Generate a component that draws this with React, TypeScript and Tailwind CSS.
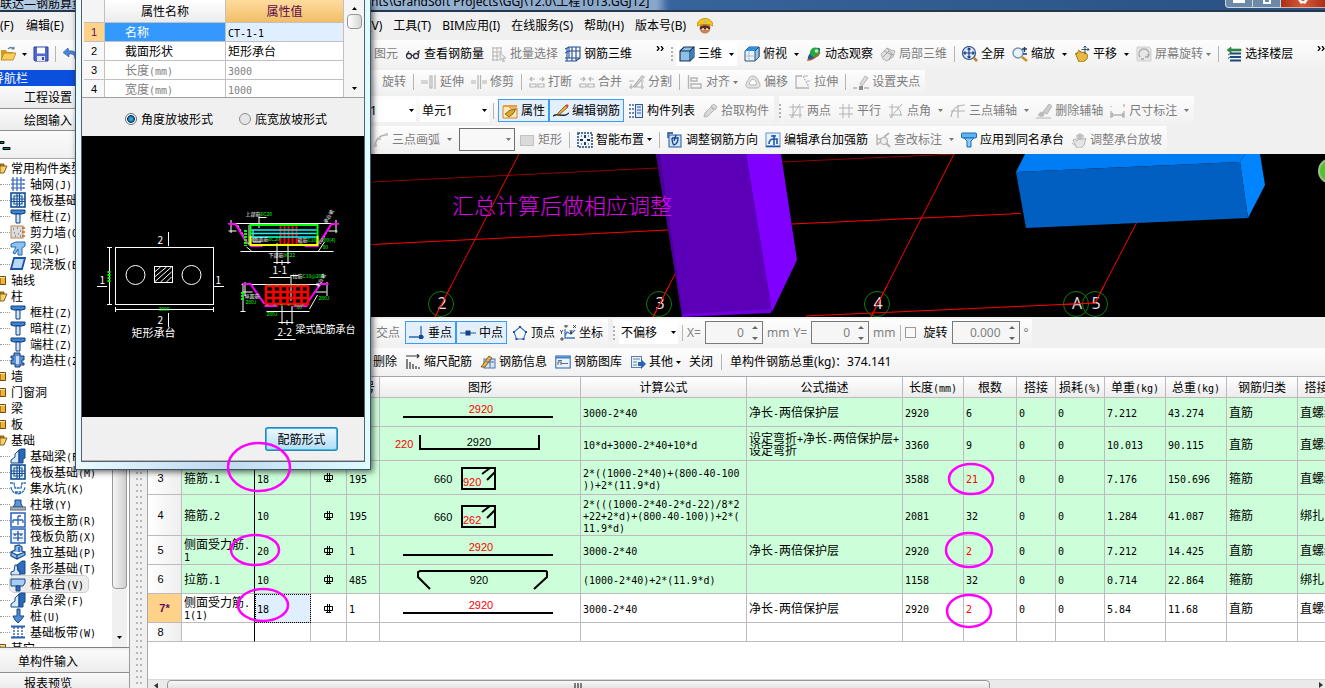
import type { ReactNode } from 'react';

const G = '#b4b4b4';
const B = '#1d57a8';

const icons: Record<string, ReactNode> = {
  open: (<><path d="M1 4h5l1 2h6v8H1z" fill="#d99a1c" /><path d="M1 14l3-7h12l-3 7z" fill="#f7cf5e" stroke="#b9790f" strokeWidth=".8" /><path d="M8 3c2-2 4-2 6 0M14 3V.8M14 3h-2.400" fill="none" stroke="#5b7f9f" strokeWidth="1.200" /></>),
  save: (<><path d="M1 1h14v14H2l-1-1z" fill="#5268cf" stroke="#2a3f9c" /><rect x="4" y="1.500" width="8" height="6" fill="#fff" /><rect x="4" y="10" width="8" height="5" fill="#dfe6f7" /><rect x="9" y="11" width="2" height="3" fill="#2f49b8" /></>),
  undo: <path d="M6 2L1 6.500l6 4.500V8c4-.5 6 1 6 5 3-5 0-9-6-8z" fill="#4a86d0" stroke="#2a5ba5" strokeWidth=".6" />,
  worker: (<><circle cx="8" cy="10" r="5.500" fill="#c98258" /><path d="M0 8C0-2 16-2 16 8c-4-2-12-2-16 0z" fill="#f6c515" stroke="#a97808" strokeWidth=".7" /><path d="M3 9c3-2 7-2 10 0v2H3z" fill="#5c2f1a" /><circle cx="6" cy="11" r=".9" fill="#fff" /><circle cx="10" cy="11" r=".9" fill="#fff" /><circle cx="8" cy="4" r="1.200" fill="#7cc4f0" /></>),
  glasses: (<><circle cx="4" cy="10" r="2.500" fill="none" stroke="#334" strokeWidth="1.300" /><circle cx="11" cy="10" r="2.500" fill="none" stroke="#334" strokeWidth="1.300" /><path d="M6.500 9.500h2M1.500 9L4 5M13.500 9L14 5l-2 1" fill="none" stroke="#334" strokeWidth="1.200" /></>),
  batch: (<><path d="M1 2h10M1 6h10M1 10h7M1 14h7M2 1v14M6 1v14M10 1v6" stroke={G} fill="none" /><path d="M9 7l6 5-3 .3 1.500 3-1.500.5-1.300-3-1.700 1.500z" fill="#eee" stroke={G} /></>),
  rebar3d: <path d="M0 3l4-2h11v11l-4 3H0M4 1v11M0 7l4-2h11M0 12h15M2 2v13M7 1v14M11 1v14" fill="none" stroke="#1f4c94" strokeWidth="1.100" />,
  cube: (<><path d="M1 5l4-4h10v10l-4 4H1z" fill="#8cc0ea" stroke="#16314f" strokeWidth="1.100" /><path d="M1 5h10v10M11 5l4-4" fill="none" stroke="#16314f" strokeWidth="1.100" /><path d="M11.500 5.500L15 2v9l-3.500 3.500z" fill="#3f7fb9" /></>),
  cubetop: (<><path d="M1 5l4-4h10v10l-4 4H1z" fill="#e8f2fb" stroke="#25527f" /><path d="M1 5l4-4h10l-4 4z" fill="#2e8fe0" /><path d="M11 5l4-4v10l-4 4z" fill="#9cc3e4" stroke="#25527f" /><path d="M5 5v10M1 10h10" stroke="#9ab" strokeWidth=".7" /></>),
  orbit: (<><ellipse cx="8" cy="8" rx="8" ry="3.500" transform="rotate(-45 8 8)" fill="#155c9c" /><circle cx="9" cy="6.500" r="5" fill="#25a844" /><circle cx="10.500" cy="5" r="1.800" fill="#b7f3bb" /><path d="M1 14c4 1 10-3 13-8" stroke="#d65227" fill="none" strokeWidth="1.300" /></>),
  part3d: (<><path d="M1 8l6-6 4 2 4 1-2 6-6 4-4-2z" fill="#e0e0e0" stroke={G} /><path d="M4 5l6 3 4 1M7 2l5 6-3 6M3 11l6-6" fill="none" stroke="#a0a0a0" /></>),
  full: (<><circle cx="7" cy="7" r="6.500" fill="#dcebfb" stroke="#31567f" strokeWidth="1.200" /><path d="M7 2v10M2 7h10M5.500 3.500L7 2l1.500 1.500M5.500 10.500L7 12l1.500-1.500M3.500 5.500L2 7l1.500 1.500M10.500 5.500L12 7l-1.500 1.500" fill="none" stroke="#1b3f88" strokeWidth="1.200" /><path d="M12 12l3 3" stroke="#c08020" strokeWidth="2.500" /></>),
  zoom: (<><circle cx="6" cy="7" r="5" fill="#e6f2fc" stroke="#7b93ab" strokeWidth="1.400" /><path d="M10 11l5 4" stroke="#c8902a" strokeWidth="2.600" /><path d="M10 3h5M12.500 1v5M11 8h4" stroke="#1f3e70" strokeWidth="1.400" /></>),
  pan: (<><path d="M2 9c0-3 3-4 5-3l5 1c2 1 2 5 0 7l-3 2H5z" fill="#e8b840" stroke="#9c6e10" strokeWidth=".9" /><path d="M4 7l-3 1M7 6L4 4" stroke="#9c6e10" /><path d="M11 0v8M7.500 3.500h7.500M9.500 1.500L11 0l1.500 1.500M13.500 2L15 3.500 13.500 5" stroke="#34506f" fill="none" /></>),
  rotscr: (<><path d="M1 1h12l2 2v12H1z" fill="#e6e6e6" stroke="#cfcfcf" /><path d="M4 11a5 5 0 1 1 8 0M12 11l-3 0M12 11V8M5 13h3" fill="none" stroke="#a8a8a8" strokeWidth="1.300" /></>),
  floors: (<><path d="M1 4l4-3v2h10v2H5v2z" fill="#2a9540" stroke="#145c24" strokeWidth=".5" /><path d="M4 7.500h11M4 11h11M4 14.500h11" stroke="#1d4b7c" strokeWidth="1.800" /><path d="M2 9l2-1.500M2 12.500L4 11" stroke="#1d4b7c" /></>),
  extend: <path d="M0 7h7M0 9h7M9 2h2v12H9zM14 1v14" fill="none" stroke={G} strokeWidth="1.200" />,
  trim: <path d="M0 7h5M0 9h5M11 7h5M11 9h5M7 1v14M9.500 1v14" fill="none" stroke={G} strokeWidth="1.200" />,
  brk: <path d="M1 10h6v3H1zM9 10h6v3H9zM1 5h5M3 3L1 5l2 2M15 5h-5M13 3l2 2-2 2" fill="none" stroke={G} strokeWidth="1.200" />,
  merge: <path d="M1 10h6v3H1zM9 10h6v3H9zM1 5h5M4 3l2 2-2 2M15 5h-5M12 3l-2 2 2 2" fill="none" stroke={G} strokeWidth="1.200" />,
  split: <path d="M0 7h5M0 13h15M11 7h4M4 13l9-11 2 1-9 10M2 10v5M13 8v7" fill="none" stroke={G} strokeWidth="1.200" />,
  align: (<><path d="M1.500 1v14M4 4h6v3H4zM4 10h10v4H4z" fill="none" stroke={G} strokeWidth="1.400" /></>),
  offset: (<><path d="M8 2c4 0 4 3 6 6s1 6-2 6H4c-3 0-4-3-2-6s2-6 6-6z" fill="#e3e3e3" stroke={G} /><path d="M8 5c2 0 2 2 3 3s1 3-1 3H6c-2 0-2-2-1-3s1-3 3-3z" fill="#fff" stroke={G} /></>),
  stretch: (<><path d="M7 2H1v12h13" fill="none" stroke={G} strokeWidth="1.300" /><path d="M8 2l6 11" stroke={G} strokeWidth="1.200" strokeDasharray="2 1" /><path d="M9 2l4 0M12 7h3" stroke={G} /></>),
  grip: (<><path d="M7 10L12 2l3 2-6 8z" fill="#ddd" stroke={G} /><path d="M0 14h4M11 14h5" stroke={G} strokeWidth="1.300" /><rect x="6" y="12" width="4" height="4" fill="#8a8a8a" /></>),
  prop: (<><path d="M1 3h6l1 2h7v10H1z" fill="#fde9c4" stroke="#d8831c" /><path d="M1 2h14v2H1z" fill="#ef9d38" /><path d="M3 11l5-4 6-1-3 5-4 3z" fill="#d7a62a" stroke="#7c5b0d" strokeWidth=".8" /></>),
  editbar: (<><path d="M2 12c3-1 5 1 11 0M2 12l-2 1M13 12l3-2" stroke="#22303e" strokeWidth="1.400" fill="none" /><path d="M5 10L13 2l2 2-8 7-3 1z" fill="#e9b13b" stroke="#6a4717" strokeWidth=".8" /><path d="M12 3l2-2 2 2-2 1z" fill="#d9452f" /></>),
  list: (<><path d="M1 2h2M1 6h2M1 10h2M1 14h2M4 2h2M4 6h2M4 10h2M4 14h2" stroke="#44618d" strokeWidth="1.500" /><rect x="7.500" y="1.500" width="7" height="13" fill="#dbe8fa" stroke="#2c58a4" /><path d="M9 4h4M9 7h4M9 10h4" stroke="#2c58a4" /></>),
  pick: <path d="M2 14l1-4 6-6 3 3-6 6zM9 3l3-2 3 3-2 3z" fill="#d9d9d9" stroke={G} />,
  two: <path d="M1 4h15M1 12h13M5 1v14M12 1L3 15M12 4v11" fill="none" stroke={G} />,
  para: <path d="M1 5h14M1 11h14M5 1v14M11 1v14" fill="none" stroke={G} />,
  angle: <path d="M1 4h10M1 12h13M4 1v14M14 1L2 15M9 5c3 1 4 4 4 8" fill="none" stroke={G} />,
  arcax: <path d="M1 8h14M8 2v13M1 14C2 6 6 2 15 2" fill="none" stroke={G} strokeWidth="1.200" />,
  delax: (<><path d="M7 9l6-8 3 2-5 8z" fill="#ccc" stroke={G} /><path d="M2 13c0-3 3-5 5-4s2 4-1 5z" fill="#bbb" /><path d="M0 15h15" stroke={G} /></>),
  dim: <path d="M1 3v1M14 1v3M1 8v7M14 8v7M1 12h13M3 10l-2 2 2 2M12 10l2 2-2 2" fill="none" stroke={G} strokeWidth="1.300" />,
  arc3: (<><path d="M2 14C3 7 7 3 13 3" fill="none" stroke={G} strokeWidth="1.400" /><path d="M1 12h3v3H1zM5 5h3v3H5zM12 1h3v3h-3z" fill="#c9c9c9" /></>),
  rect: <rect x="1.500" y="3.500" width="13" height="10" fill="#dadada" stroke="#c2c2c2" />,
  smart: (<><rect x="1" y="1" width="14" height="14" fill="#eef4fc" stroke="#24466f" strokeWidth="1.500" strokeDasharray="2 1" /><path d="M8 3v3M8 10v3M3 8h3M10 8h3" stroke="#182c48" strokeWidth="1.800" /><path d="M4 4h1M11 4h1M4 12h1M11 12h1" stroke="#182c48" /></>),
  dir: (<><rect x="2" y="3" width="12" height="12" fill="#cfe2f7" stroke={B} /><path d="M1 6V1h5M5 6h6c0 4-1 6-4 7M5 6c0 3 0 5 2 7M9 3L7 9" fill="none" stroke="#173f86" strokeWidth="1.300" /></>),
  cap: (<><rect x="1" y="1" width="14" height="14" fill="#eaf2fc" stroke="#5d93d4" /><path d="M9 3v10M4 12c0-3 1-5 5-5h3v5M6 4h5" fill="none" stroke="#1d57a8" strokeWidth="1.600" /><path d="M1 13.500h14V15H1z" fill={B} /></>),
  check: (<><path d="M2 2v5h4M2 13l4-4M2 7v6" stroke={G} fill="none" strokeWidth="1.300" /><circle cx="9" cy="9" r="3.500" fill="#eee" stroke={G} strokeWidth="1.200" /><path d="M11 11l4 4M9 5l5-4" stroke={G} strokeWidth="1.800" /></>),
  apply: (<><rect x=".5" y="1" width="15" height="5" rx="1" fill="#5eb4f2" stroke="#1d6bb3" /><path d="M3 6h10l-3 3v6H6V9z" fill="#8ccbf7" stroke="#1d6bb3" /></>),
  hand: <path d="M2 8l2-1 2 2V3h2v5V2h2v6V3h2v5l2-2 1 1-2 6-3 3H6zM1 11l4 3" fill="#e4e4e4" stroke={G} />,
  perp: (<><path d="M0 12h15M12 1v11" stroke="#2b68ae" strokeWidth="1.300" /><rect x="10" y="10" width="4" height="4" fill="#174a96" /></>),
  mid: (<><path d="M0 8h16" stroke="#5a8ec4" strokeWidth="1.500" /><rect x="5.500" y="5.500" width="5" height="5" fill="#123f86" /></>),
  vertex: (<><path d="M8 2l6 5-2.500 7h-7L2 7z" fill="none" stroke="#3c78bd" strokeWidth="1.100" /><path d="M7 1h2v2H7zM1 6h2v2H1zM13 6h2v2h-2zM3.500 13h2v2h-2zM10.500 13h2v2h-2z" fill="#1c4c95" /></>),
  coord: (<><path d="M5 4v9h10M5 11l2-4 4 2 4-4" fill="none" stroke="#3c78bd" strokeWidth="1.300" /><path d="M0 5l1.500 2L3 5M1.500 7v2M1 13h2v2H1zM5 0h2v2H5zM13 0l3 3M16 0l-3 3M10 5l1 4 1-4" stroke="#222" strokeWidth=".8" fill="none" /></>),
  scale: <path d="M1 2h13M12 0l2 2-2 2M2 5v10M5 8v7M8 10v5M11 12v3M14 13v2" fill="none" stroke="#35363a" strokeWidth="1.200" />,
  info: (<><rect x="4" y="5" width="11" height="9" fill="#d5e5f7" stroke="#4c75a8" /><path d="M1 13L9 2l3 2-7 9z" fill="#efb23e" stroke="#6a4717" strokeWidth=".8" /><path d="M6 8h8M10 5v9" stroke="#4c75a8" /></>),
  lib: (<><rect x=".8" y="2" width="14.400" height="12" fill="#eaf3fc" stroke="#2a5fa6" /><path d="M1 2.500h14v2H1z" fill="#3f83cf" /><path d="M3 11V8h3v3M6 9.500h7M3 6.500h4" fill="none" stroke="#5c6e80" strokeWidth="1.100" /></>),
  other: (<><rect x="1.500" y="2.500" width="10" height="11" fill="#edf3fb" stroke="#5a7fae" /><path d="M3 5h7M3 8h4M3 11h4" stroke="#5a7fae" /><path d="M8 8h3V5l5 5-5 5v-3H8z" fill="#2b63b5" /></>),
  axis: <path d="M3 1v14M7 1v14M11 1v14M1 4h13M1 8h13M1 12h13M14 3v2M14 7v2M14 11v2" fill="none" stroke="#2a62b8" strokeWidth="1.200" />,
  raft: (<><rect x="1" y="1" width="14" height="14" fill="#e2effc" stroke="#174f91" strokeWidth="1.600" /><path d="M4 4h8v8H4zM7 4v8M9.500 4v8M4 7h8M4 9.500h8M7 1v3M9.500 1v3M7 12v3M9.500 12v3M1 7h3M12 7h3M1 9.500h3M12 9.500h3" fill="none" stroke="#174f91" strokeWidth="1.100" /></>),
  column: (<><path d="M1 2h14v3l-3 1H4L1 5z" fill="#3c84d6" stroke="#123f80" /><path d="M6 6h4v9H6z" fill="#cfe3fa" stroke="#123f80" /></>),
  wall: (<><rect x="1" y="2" width="12" height="12" fill="#dcdcdc" stroke="#b98454" /><path d="M3 5h1M7 4h1M10 7h1M4 9h1M8 10h1M5 12h1M10 12h1" stroke="#444" /><path d="M12 4h3M12 8h3M12 12h3" stroke="#cc6a1b" strokeWidth="1.600" /></>),
  beam: <path d="M1 4l5-2h9v4l-3 2v7H8V9L5 14l-2-1 3-6H1z" fill="#8fc3ee" stroke="#2469b3" />,
  slab: <path d="M4 2h11l-3 11H1z" fill="#b9d8f6" stroke="#1a55a5" strokeWidth="1.800" />,
  struct: (<><path d="M4 1h6v3h4v4h-2v3h2v2h-4v2H5v-3H1V8h2V6H1V4h3z" fill="#5c8fd0" stroke="#173c80" /><path d="M6 4h3v8H6z" fill="#c7dcf6" /></>),
  fbeam: (<><path d="M1 15v-3l4-3V6l4-4v13z" fill="#d8e9fb" stroke="#14478c" /><path d="M9 2l2-1h4v9l-2 1v4H9z" fill="#2868b4" stroke="#14478c" /></>),
  pit: <path d="M0 3h4l1 5h6l1-5h4M1 7c1 9 13 9 14 0M5 12h6" fill="none" stroke="#2a6ec0" strokeWidth="1.300" strokeDasharray="3 .6" />,
  pier: (<><path d="M5 8V4h6v4l2 3H3z" fill="#5d95da" stroke="#17498f" /><path d="M0 11h16v3H0z" fill="#a7b4c2" stroke="#5a6675" /></>),
  rmain: (<><rect x="1" y="1" width="14" height="14" fill="#fff" stroke="#2a62b8" strokeWidth="1.500" /><path d="M8 4h3M8 4v9M3 8h10M3 8v3M13 8v3" fill="none" stroke="#2a62b8" strokeWidth="1.300" /></>),
  rneg: (<><rect x="1" y="1" width="14" height="14" fill="#eaf2fc" stroke="#2a62b8" strokeWidth="1.500" /><path d="M8 3v10M3 6h10M3 10h10M5 8V6M11 8V6" fill="none" stroke="#174a94" strokeWidth="1.200" /></>),
  indep: <path d="M1 8l4-2V2l4-1 3 2v4l3 1v3l-8 4-6-3zM1 8l6 3 8-3M7 11v4M9 3v5" fill="#8fbdec" stroke="#14478c" strokeWidth="1.200" />,
  strip: (<><path d="M1 15v-3l3-1 1-6h2l1 6 2 1v3z" fill="#d3e6fa" stroke="#14478c" /><path d="M7 5l5-4h3v13h-5v-3l-2-1z" fill="#2d6db9" stroke="#14478c" /></>),
  pilecap: (<><path d="M1 3h14v4l-2 3H1z" fill="#a9cdf2" stroke="#14478c" /><path d="M6 10h4v5H6z" fill="#2d6db9" stroke="#14478c" /></>),
  pile: <path d="M7 1h3v7h4l-3 4-3 3-3-3-2-4h4z" fill="#4f8cd6" stroke="#14478c" />,
  band: (<><path d="M1 2.500h14M1 13.500h14" stroke="#2a62b8" strokeWidth="2" /><path d="M4 3v10M8 3v10M12 3v10" stroke="#14478c" strokeDasharray="2 1" strokeWidth="1.200" /></>),
};

function Icon({ n }: { n: string }) {
  return <svg viewBox="0 0 16 16" className="size-4 shrink-0" aria-hidden="true">{icons[n]}</svg>;
}

function Folder({ open }: { open?: boolean }) {
  return (
    <svg viewBox="0 0 11 16" className="h-4 w-[11px] shrink-0" aria-hidden="true">
      {open ? (
        <>
          <path d="M0 4h4v3H0z" fill="#c98a1c" stroke="#6f4a08" strokeWidth=".8" />
          <path d="M0 13V6h7l-3 7z" fill="#f6cf6a" stroke="#7a5310" strokeWidth=".9" />
        </>
      ) : (
        <>
          <path d="M0 4.500h5.500v8H0z" fill="#efb33c" stroke="#6f4a08" />
          <path d="M0 5.500h5" stroke="#ffe6a0" />
        </>
      )}
    </svg>
  );
}

function Down({ off }: { off?: boolean }) {
  return (
    <svg viewBox="0 0 5 3" className="h-[3px] w-[5px] shrink-0" aria-hidden="true">
      <path d="M0 0h5L2.500 3z" fill={off ? '#777' : '#000'} />
    </svg>
  );
}

/* Sets latin runs in a half-width face beside full-width characters. */
function Mix({ t }: { t: string }) {
  return (
    <>
      {t.split(/([\x20-\x7e]+)/).map((s, i) =>
        i % 2 ? (
          <span key={i} className="font-['DejaVu_Sans_Mono',monospace] text-[10px] leading-[8px]">{s}</span>
        ) : (
          <span key={i}>{s}</span>
        ),
      )}
    </>
  );
}

type ToolProps = { icon?: string; label: string; off?: boolean; drop?: boolean; tight?: boolean; boxed?: boolean; lit?: boolean };

function Tool({ icon, label, off, drop, tight, boxed, lit }: ToolProps) {
  const base = 'flex shrink-0 items-center gap-[3px] whitespace-nowrap leading-4';
  const look = boxed ? 'h-[23px] border border-[#3c9bf5] bg-[#e3f0fc] px-[3px]' : lit ? 'h-6 bg-white px-[3px]' : 'h-6';
  return (
    <button type="button" disabled={off} className={`${base} ${look} ${off ? 'text-[#7d7d7d]' : 'text-black'}`}>
      {icon && <Icon n={icon} />}
      <span>{label}</span>
      {drop && <span className={tight ? '' : 'pl-1'}><Down off={off} /></span>}
    </button>
  );
}

const Sep = () => <span className="h-4 w-px shrink-0 bg-[#b5b5b5]" />;

function Grip() {
  return (
    <svg viewBox="0 0 2 14" className="h-[14px] w-[2px] shrink-0" aria-hidden="true">
      <path d="M1 0v14" stroke="#b0b0b0" strokeWidth="2" strokeDasharray="2 2" />
    </svg>
  );
}

function More() {
  return (
    <svg viewBox="0 0 8 5" className="mb-3 h-[5px] w-2 shrink-0" aria-hidden="true">
      <path d="M1 0l2 2.500L1 5M5 0l2 2.500L5 5" fill="none" stroke="#000" strokeWidth="1.300" />
    </svg>
  );
}

function Spin({ label, value, wide }: { label: string; value: string; wide?: boolean }) {
  return (
    <span className={`flex h-[23px] shrink-0 items-center border border-[#7a7a7a] bg-[#f6f6f6] pr-1 ${wide ? 'w-[68px]' : 'w-[58px]'}`}>
      <input aria-label={label} defaultValue={value} className="w-full min-w-0 bg-transparent pr-2 text-right text-[12px] text-[#808080]" />
      <svg viewBox="0 0 6 16" className="h-4 w-[6px] shrink-0" aria-hidden="true">
        <path d="M0 4l3-3 3 3zM0 12l3 3 3-3z" fill="#666" />
      </svg>
    </span>
  );
}

const band = 'flex items-center bg-linear-to-b from-[#fdfdfd] to-[#f1f1f1]';

type Node = { t: string; icon?: string; open?: boolean; sel?: boolean };
const tree: Node[] = [
  { t: '常用构件类型', open: true },
  { t: '轴网(J)', icon: 'axis' },
  { t: '筏板基础', icon: 'raft' },
  { t: '框柱(Z)', icon: 'column' },
  { t: '剪力墙(Q', icon: 'wall' },
  { t: '梁(L)', icon: 'beam' },
  { t: '现浇板(B', icon: 'slab' },
  { t: '轴线' },
  { t: '柱', open: true },
  { t: '框柱(Z)', icon: 'column' },
  { t: '暗柱(Z)', icon: 'column' },
  { t: '端柱(Z)', icon: 'column' },
  { t: '构造柱(Z', icon: 'struct' },
  { t: '墙' },
  { t: '门窗洞' },
  { t: '梁' },
  { t: '板' },
  { t: '基础', open: true },
  { t: '基础梁(F', icon: 'fbeam' },
  { t: '筏板基础(M)', icon: 'raft' },
  { t: '集水坑(K)', icon: 'pit' },
  { t: '柱墩(Y)', icon: 'pier' },
  { t: '筏板主筋(R)', icon: 'rmain' },
  { t: '筏板负筋(X)', icon: 'rneg' },
  { t: '独立基础(P)', icon: 'indep' },
  { t: '条形基础(T)', icon: 'strip' },
  { t: '桩承台(V)', icon: 'pilecap', sel: true },
  { t: '承台梁(F)', icon: 'fbeam' },
  { t: '桩(U)', icon: 'pile' },
  { t: '基础板带(W)', icon: 'band' },
  { t: '其它' },
];

function Sidebar() {
  const tab = 'shrink-0 border-b border-[#8f8f8f] bg-linear-to-b from-[#fafafa] to-[#ececec] text-[12px] leading-4';
  return (
    <aside className="flex w-[130px] shrink-0 flex-col border-r border-[#9a9a9a] bg-[#f0f0f0] font-['Noto_Sans_CJK_SC',sans-serif]">
      <h2 className="mt-[2px] h-4 shrink-0 overflow-hidden bg-[#0a50dc] text-[12px] leading-4 text-white">
        <span className="-ml-2">导航栏</span>
      </h2>
      <button type="button" className={`${tab} h-[23px] pl-6 text-left`}>工程设置</button>
      <button type="button" className={`${tab} h-[22px] pl-6 text-left`}>绘图输入</button>
      <div className="h-[28px] shrink-0 border-b border-[#a9a9a9] bg-linear-to-b from-[#fbfbfb] to-[#f0f0f0]">
        <svg viewBox="0 0 12 28" className="h-7 w-3" aria-hidden="true">
          <path d="M0 10.500h4v2H0zM3 16.500h7v2H3z" fill="#0a8a80" stroke="#000" />
        </svg>
      </div>
      <div className="flex min-h-0 flex-1 border-b border-[#808080] bg-white pt-px">
        <ul className="flex-1 overflow-hidden text-[12px]">
          {tree.map((n, i) => (
            <li key={i} className="flex h-4 items-center whitespace-pre leading-4">
              {n.icon ? (
                <>
                  <span className="w-[10px] shrink-0 border-t border-dotted border-[#999]" />
                  <span className={`flex h-4 items-center gap-1 pr-1 ${n.sel ? 'rounded-sm bg-[#ececec] outline outline-[#cfcfcf]' : ''}`}>
                    <Icon n={n.icon} />
                    <span><Mix t={n.t} /></span>
                  </span>
                </>
              ) : (
                <>
                  <Folder open={n.open} />
                  <span>{n.t}</span>
                </>
              )}
            </li>
          ))}
        </ul>
        <div className="mr-[2px] flex w-[15px] shrink-0 flex-col items-center bg-[#f0f0f0]">
          <span className="h-[429px] w-full rounded-sm border border-[#989898] bg-linear-to-r from-[#f6f6f6] to-[#cfcfcf]" />
          <span className="mt-auto pb-2"><Down /></span>
        </div>
      </div>
      <button type="button" className={`${tab} mt-[2px] h-[23px] pl-[18px] text-left`}>单构件输入</button>
      <button type="button" className={`${tab} h-[15px] overflow-hidden border-b-0 pl-6 pt-[2px] text-left`}>报表预览</button>
    </aside>
  );
}

const axes: [string, number][] = [['2', 441], ['3', 659], ['4', 877], ['A', 1076], ['5', 1095]];

function Scene() {
  return (
    <svg viewBox="148 154 1177 163" preserveAspectRatio="xMinYMin slice" className="block h-[163px] w-full bg-black">
      <g fill="none" stroke="#f00" strokeWidth="1">
        <path d="M371 182L658 168M782 162L955 154" stroke="#8e0000" />
        <path d="M371 244.500L668 230M792 224L1021 213.500" />
        <path d="M519 154L435 317M675 274L653 317M954 154L871 317M1137 222L1095 303M806 316L1095 303" />
      </g>
      <path d="M656 154h90l26 156-90 6z" fill="#5c00b8" />
      <path d="M656 154h4l23 162h-1z" fill="#4a0096" />
      <path d="M746 154h35l16 106-25 52z" fill="#8000ff" />
      <path d="M682 314l90-5-1 4-89 4z" fill="#7000e0" />
      <path d="M1025 154h220l-5 8-224 10z" fill="#007df5" />
      <path d="M1240 162l5-8h15l5 31-17 33z" fill="#0084ff" />
      <path d="M1016 172l224-10 8 56-222 10z" fill="#005fc0" />
      {axes.map(([t, x]) => (
        <g key={t}>
          <circle cx={x} cy="304" r="12.500" fill="none" stroke="#0b800b" />
          <text x={x + 1} y="309" textAnchor="middle" fill="#e4e4e4" fontSize="16" fontFamily="Open Sans, sans-serif">{t}</text>
        </g>
      ))}
      <path d="M451 286L435 317M669 286L653 317M887 286L871 317M1104 286L1095 303M1062 304.500L1095 303" stroke="#f00" fill="none" />
      <text x="452" y="214" fill="#e000f0" fontSize="22" fontFamily="Noto Sans CJK SC, sans-serif" fontWeight="300">汇总计算后做相应调整</text>
      <circle cx="1331" cy="171" r="12" fill="#55c22c" stroke="#9bbf8f" strokeWidth="2" />
    </svg>
  );
}

type Row = { h: string; n: string; name: string; dia: string; fig: string; shape: ReactNode; f: string; d: string; v: string[]; red?: boolean; white?: boolean };
const dark = { fill: 'none', stroke: '#000', strokeWidth: 2 };
const bar = (<><path d="M23 19h150" {...dark} /><text x="101" y="15" textAnchor="middle" fill="#f00">2920</text></>);
const stirrup = (y: number, a: string) => (
  <>
    <path d={`M82 ${y}h33v21h-33zM102 ${y + 6}l8-6M107 ${y + 12}l8-8`} {...dark} />
    <text x="54" y={y + 15}>660</text>
    <text x="83" y={y + 18} fill="#f00">{a}</text>
  </>
);

const rows: Row[] = [
  { h: 'h-[29px]', n: '', name: '', dia: '', fig: '', shape: bar, f: '3000-2*40', d: '净长-两倍保护层', v: ['2920', '6', '0', '0', '7.212', '43.274', '直筋', '直螺纹'] },
  { h: 'h-[34px]', n: '', name: '', dia: '', fig: '', shape: (<><path d="M40 8v14h119V8" {...dark} /><text x="99" y="19" textAnchor="middle">2920</text><text x="15" y="21" fill="#f00">220</text></>), f: '10*d+3000-2*40+10*d', d: '设定弯折+净长-两倍保护层+\n设定弯折', v: ['3360', '9', '0', '0', '10.013', '90.115', '直筋', '直螺纹'] },
  { h: 'h-[34px]', n: '3', name: '箍筋.1', dia: '18', fig: '195', shape: stirrup(7, '920'), f: '2*((1000-2*40)+(800-40-100\n))+2*(11.9*d)', d: '', v: ['3588', '21', '0', '0', '7.176', '150.696', '箍筋', '直螺纹'], red: true },
  { h: 'h-[41px]', n: '4', name: '箍筋.2', dia: '10', fig: '195', shape: stirrup(11, '262'), f: '2*(((1000-2*40-2*d-22)/8*2\n+22+2*d)+(800-40-100))+2*(\n11.9*d)', d: '', v: ['2081', '32', '0', '0', '1.284', '41.087', '箍筋', '绑扎'] },
  { h: 'h-[29px]', n: '5', name: '侧面受力筋.\n1', dia: '20', fig: '1', shape: bar, f: '3000-2*40', d: '净长-两倍保护层', v: ['2920', '2', '0', '0', '7.212', '14.425', '直筋', '直螺纹'], red: true },
  { h: 'h-[29px]', n: '6', name: '拉筋.1', dia: '10', fig: '485', shape: (<><path d="M50 24L38 12V7l2-1h126l1 1v5l-13 12" {...dark} /><text x="99" y="19" textAnchor="middle">920</text></>), f: '(1000-2*40)+2*(11.9*d)', d: '', v: ['1158', '32', '0', '0', '0.714', '22.864', '箍筋', '绑扎'] },
  { h: 'h-[29px]', n: '7*', name: '侧面受力筋.\n1(1)', dia: '18', fig: '1', shape: bar, f: '3000-2*40', d: '净长-两倍保护层', v: ['2920', '2', '0', '0', '5.84', '11.68', '直筋', '直螺纹'], red: true, white: true },
  { h: 'h-[19px]', n: '8', name: '', dia: '', fig: '', shape: null, f: '', d: '', v: ['', '', '', '', '', '', '', ''], white: true },
];

function Grade() {
  return (
    <svg viewBox="0 0 9 9" className="mx-auto size-[9px]" aria-label="C">
      <path d="M.5 2.500h8v4h-8zM3.500 0v9M5.500 0v9M2 8.500h5" fill="none" stroke="#000" />
    </svg>
  );
}

function BarTable() {
  const line = 'border-b border-r border-[#bfbabf]';
  const cell = `${line} overflow-hidden whitespace-pre px-[2px] py-0 leading-3`;
  const heads = ['', '', '', '', '图号', '图形', '计算公式', '公式描述', '长度(mm)', '根数', '搭接', '损耗(%)', '单重(kg)', '总重(kg)', '钢筋归类', '搭接形式'];
  return (
    <table className="w-full min-w-[1212px] table-fixed border-separate border-spacing-0 font-['Noto_Sans_CJK_SC',sans-serif] text-[12px]">
      <colgroup>
        <col className="w-[34px]" /><col className="w-[73px]" /><col className="w-[56px]" /><col className="w-[36px]" /><col className="w-[33px]" />
        <col className="w-[201px]" /><col className="w-[166px]" /><col className="w-[156px]" /><col className="w-[61px]" /><col className="w-[53px]" />
        <col className="w-[39px]" /><col className="w-[49px]" /><col className="w-[61px]" /><col className="w-[61px]" /><col className="w-[71px]" /><col />
      </colgroup>
      <thead>
        <tr className="h-[21px]">
          {heads.map((h, i) => (
            <th key={i} className={`${line} overflow-hidden whitespace-pre bg-linear-to-b from-white to-[#ececec] p-0 text-center font-normal leading-4`}><Mix t={h} /></th>
          ))}
        </tr>
      </thead>
      <tbody>
        {rows.map((r, i) => {
          const cur = r.n === '7*';
          return (
            <tr key={i} className={`${r.h} ${r.white ? 'bg-white' : 'bg-[#ccffd9]'}`}>
              <th className={`${line} p-0 text-center font-['Liberation_Sans',sans-serif] text-[11px] leading-3 ${cur ? 'bg-[#ffd28a] font-bold text-[#5a1060]' : 'bg-linear-to-r from-white to-[#eeeeee] pr-2 font-normal'}`}>{r.n}</th>
              <td className="overflow-hidden whitespace-pre border-b border-r border-b-[#bfbabf] border-r-black px-[2px] py-0 leading-3"><Mix t={r.name} /></td>
              <td className={`${cell} ${cur ? 'bg-[#e0efff] outline outline-dotted outline-black -outline-offset-1' : ''}`}><Mix t={r.dia} /></td>
              <td className={cell}>{r.dia && <Grade />}</td>
              <td className={cell}><Mix t={r.fig} /></td>
              <td className={`${line} p-0 align-top`}>
                {r.shape && <svg className="block h-[28px] w-[200px] overflow-visible" fontSize="11" fontFamily="Liberation Sans, sans-serif">{r.shape}</svg>}
              </td>
              <td className={cell}><Mix t={r.f} /></td>
              <td className={cell}><Mix t={r.d} /></td>
              {r.v.map((v, j) => (
                <td key={j} className={`${cell} ${j === 1 && r.red ? 'text-[#f00]' : ''}`}><Mix t={v} /></td>
              ))}
            </tr>
          );
        })}
      </tbody>
    </table>
  );
}

function Drawing() {
  const w = { fill: 'none', stroke: '#fff', strokeWidth: 1 };
  const m = { fill: 'none', stroke: '#f0f', strokeWidth: 2 };
  return (
    <svg viewBox="82 136 281 281" className="block h-[281px] w-full bg-black" fontFamily="Noto Sans CJK SC, sans-serif">
      <g {...w} shapeRendering="crispEdges">
        <path d="M114.500 247.500h98v57h-98zM108.500 247v58M106 247.500h5M106 304.500h5M114 309.500h99M114.500 307v5M212.500 307v5M167.500 232v14M167.500 313v14M96 286.500h10M213 286.500h10" />
        <path d="M153.500 266.500h18v16h-18z" />
      </g>
      <circle cx="135" cy="275" r="9.500" {...w} /><circle cx="191" cy="275" r="9.500" {...w} />
      <path d="M154 272l6-5M154 277l12-10M154 282l17-15M160 282l11-10M166 282l5-5" {...w} />
      <path d="M228 223.500h110M230.500 220v13M335.500 220v13M228 231h8M328 231h9M258.500 217v11M258 217.500h8M248.500 225v20M252.500 230v12h8M240 251.500h93M276.500 243v21M287.500 243v21M273 262.500h17M281.500 260v5M246 247l5 4M318 251l6-9" {...w} />
      <path d="M237 225l11 19M330 225l-10 19" {...w} strokeDasharray="3 1" />
      <path d="M228 224h7l12 20M338 224h-7l-13 20M250 246h12M304 246h14" {...m} />
      <path d="M280 225v19M284 225v19M288 225v19M292 225v19M296 225v19" stroke="#f00" strokeWidth="2" />
      <path d="M250 230h66M250 233.500h66M250 237h66" stroke="#0ff" strokeWidth="1.500" />
      <path d="M250 245v-20h67v20" fill="none" stroke="#0f0" strokeWidth="2" />
      <path d="M250 236v9h67v-9" fill="none" stroke="#ff0" strokeWidth="2" />
      <path d="M241 284.500h86M244.500 282v14M326.500 282v14M242 292h10M314 292h12M242.500 283v28M240 311.500h5M290.500 275v26M290 275.500h8M266 311.500h43M281.500 306v18M291.500 306v18M278 322.500h15M286.500 320v5M309 309l8-14" {...w} />
      <path d="M242 284h8l14 20M328 284h-8l-14 20M264 306h13M293 306h14" {...m} />
      <path d="M265.500 285v20M273 285v20M280 285v20M287 285v20M294 285v20M301 285v20M307.500 285v20M265 286h43M265 292h43M265 298h43M265 304h43" stroke="#f00" strokeWidth="2.600" />
      <path d="M268 285h36M266 305h40" stroke="#0f0" strokeDasharray="2 5" />
      <path d="M269 277.500h21M274 339.500h21" {...w} />
      <path d="M108.500 271v12M245 230v16M242 292v9" stroke="#0f0" strokeWidth="3" strokeDasharray="2 1" />
      <g fill="#fff" fontSize="10">
        <text x="157" y="244">2</text><text x="157" y="324">2</text><text x="99" y="284">1</text><text x="215" y="284">1</text>
        <text x="131" y="337" fontSize="11">矩形承台</text>
        <text x="272" y="274">1-1</text><text x="277" y="336">2-2</text>
        <text x="295" y="333" fontSize="10">梁式配筋承台</text>
      </g>
      <g fontSize="5" fill="#fff">
        <text x="245" y="216">上部筋<tspan fill="#0f0">6C20</tspan></text>
        <text x="253" y="241">侧面筋<tspan fill="#0f0">8C20</tspan></text>
        <text x="297" y="242">箍筋<tspan fill="#0f0">C10@200(4)</tspan></text>
        <text x="268" y="257">下部筋<tspan fill="#0f0">9C22</tspan></text>
        <text x="292" y="278">拉筋<tspan fill="#0f0">C10@200</tspan></text>
        <text x="244" y="298">纵面筋</text>
        <text x="326" y="224" transform="rotate(-60 326 224)">承台坡</text>
        <text x="318" y="288" transform="rotate(-60 318 288)">承台坡</text>
        <g fill="#0f0">
          <text x="158" y="311">3000</text><text x="322" y="249">80</text><text x="245" y="304">280J</text>
          <text x="318" y="300">280J</text><text x="266" y="316">280J</text><text x="296" y="309">80</text>
        </g>
      </g>
    </svg>
  );
}

function PropertyDialog() {
  const line = 'border-b border-r border-[#c0c0c0]';
  const data = [['1', '名称', 'CT-1-1'], ['2', '截面形状', '矩形承台'], ['3', '长度(mm)', '3000'], ['4', '宽度(mm)', '1000']];
  return (
    <section className="absolute left-[75px] top-0 w-[296px] border-x border-b border-[#3f5468] bg-linear-to-r from-[#e9fbff] via-[#bfd9f0] to-[#dffcff] px-[5px] pb-[7px] font-['Noto_Sans_CJK_SC',sans-serif] text-[12px] shadow-[2px_2px_6px_rgba(0,0,0,0.6)]">
      <div className="border-x border-b border-[#55606b] bg-[#f0f0f0]">
        <div className="flex h-[98px] border-b border-[#a0a0a0] bg-[#f5f5f5] pl-[2px]">
          <div className="flex-1 overflow-hidden">
            <table className="w-full table-fixed border-separate border-spacing-0">
              <colgroup><col className="w-[21px]" /><col className="w-[121px]" /><col /></colgroup>
              <thead>
                <tr className="h-[23px] leading-4">
                  <th className={`${line} bg-[#f4f4f4] p-0`} />
                  <th className={`${line} bg-linear-to-b from-white to-[#ececec] p-0 text-center font-normal`}>属性名称</th>
                  <th className={`${line} bg-linear-to-b from-[#ffdc9e] to-[#f2bd66] p-0 text-center font-normal text-[#5a0a50]`}>属性值</th>
                </tr>
              </thead>
              <tbody>
                {data.map(([n, k, v], i) => (
                  <tr key={n} className={`h-[19px] leading-4 ${i > 1 ? 'text-[#808080]' : 'text-black'}`}>
                    <th className={`${line} p-0 text-center font-['Liberation_Sans',sans-serif] text-[11px] font-normal ${i === 0 ? 'bg-[#ffd28a] text-[#5a1060]' : 'bg-[#f8f8f8] text-black'}`}>{n}</th>
                    <td className={`${line} p-0 pl-5 ${i === 0 ? 'bg-[#3399ff] text-white' : 'bg-white'}`}><Mix t={k} /></td>
                    <td className={`${line} p-0 pl-[2px] ${i === 0 ? 'bg-[#dfefff]' : 'bg-white'}`}><Mix t={v} /></td>
                  </tr>
                ))}
              </tbody>
            </table>
          </div>
          <div className="flex w-[20px] shrink-0 flex-col items-center pb-[7px] pt-[7px]">
            <span className="rotate-180"><Down /></span>
            <span className="mt-1 h-[15px] w-[15px] rounded-sm border border-[#979797] bg-linear-to-r from-white to-[#d5d5d5]" />
            <span className="mt-auto"><Down /></span>
          </div>
        </div>
        <div className="flex h-[38px] items-center gap-[26px] pl-[43px] pt-1">
          <label className="flex items-center gap-1">
            <input type="radio" name="slope" defaultChecked className="size-3 appearance-none rounded-full border border-[#5c6b77] bg-white bg-radial from-[#2fa3dc] from-25% to-white to-55% checked:bg-radial checked:from-[#2fa3dc] checked:from-20% checked:via-[#0c3c5d] checked:via-50% checked:to-white checked:to-60%" />
            角度放坡形式
          </label>
          <label className="flex items-center gap-1">
            <input type="radio" name="slope" className="size-3 appearance-none rounded-full border border-[#8d8d8d] bg-[#e6e6e6]" />
            底宽放坡形式
          </label>
        </div>
        <Drawing />
        <div className="flex h-[44px] items-center justify-end border-b border-[#b5b5b5] pr-[26px]">
          <button type="button" className="h-6 w-[73px] rounded-[3px] border-2 border-[#35bce8] bg-linear-to-b from-[#eef8fe] to-[#b2def6] text-[12px] leading-4 outline outline-[#3c7fb1] -outline-offset-1">配筋形式</button>
        </div>
      </div>
    </section>
  );
}

const marks = [[259, 467, 31, 24], [255, 550, 24, 15], [263, 605, 25, 16], [971, 479, 22, 15], [969, 550, 23, 17], [969, 611, 22, 16]];

export default function App() {
  return (
    <div className="relative flex h-screen flex-col overflow-hidden bg-[#f0f0f0] font-['Noto_Sans','Noto_Sans_CJK_SC',sans-serif] text-[12px] text-black">
      <header className="flex h-[12px] shrink-0 items-start overflow-hidden border-b-2 border-[#25384d] bg-linear-to-r from-[#b9cfe6] via-[#37649c] to-[#28517f]">
        <div className="-mt-1 flex h-4 w-[371px] shrink-0 whitespace-nowrap leading-4">联达—钢筋算量</div>
        <h1 className="-mt-[6px] flex-1 whitespace-nowrap text-[12px] leading-4">
          <span className="bg-[#a9c2dc]/70 pr-2 shadow-[0_0_8px_6px_rgba(169,194,220,0.7)]">nts\GrandSoft Projects\GGJ\12.0\工程1013.GGJ12]</span>
        </h1>
        <div className="flex h-2">
          <button type="button" aria-label="最小化" className="flex w-7 justify-center rounded-bl border border-t-0 border-[#c9d6e4] bg-[#6d89a8]"><span className="h-[3px] w-3 bg-white" /></button>
          <button type="button" aria-label="还原" className="flex w-7 justify-center border-b border-r border-[#c9d6e4] bg-[#6d89a8]"><span className="h-1 w-2 border-2 border-t-0 border-white" /></button>
          <button type="button" aria-label="关闭" className="flex w-11 items-start justify-center border-b border-[#e0b0a0] bg-linear-to-r from-[#a83018] via-[#d8593a] to-[#a83018]">
            <svg viewBox="0 0 10 4" className="h-1 w-[10px]" aria-hidden="true"><path d="M3 0l2 1.500L7 0h3L7 4 5 3 3 4 0 0z" fill="#fff" /></svg>
          </button>
        </div>
      </header>

      <nav className="flex h-7 shrink-0 items-center leading-4">
        <button type="button" className="w-[26px] text-left">(F)</button>
        <button type="button">编辑(E)</button>
        <div className="ml-[304px] flex items-center gap-[11px]">
          <button type="button">(V)</button>
          {['工具(T)', 'BIM应用(I)', '在线服务(S)', '帮助(H)', '版本号(B)'].map((m) => <button key={m} type="button">{m}</button>)}
          <Icon n="worker" />
        </div>
      </nav>

      <div className="flex h-7 shrink-0 items-center">
        <div className={`${band} h-7 w-[668px] shrink-0 gap-[6px]`}>
          <Icon n="open" /><Down />
          <Icon n="save" /><Sep /><Icon n="undo" />
          <div className="ml-[290px] flex flex-1 items-center gap-[7px]">
            <Tool label="图元" off />
            <Tool icon="glasses" label="查看钢筋量" />
            <Tool icon="batch" label="批量选择" off />
            <Tool icon="rebar3d" label="钢筋三维" />
          </div>
          <span className="pr-1"><More /></span>
        </div>
        <div className={`${band} h-7 flex-1 gap-[7px] pl-[3px]`}>
          <div className="flex items-center gap-[3px]"><Grip /><Tool icon="cube" label="三维" drop lit /></div>
          <Tool icon="cubetop" label="俯视" drop />
          <Tool icon="orbit" label="动态观察" />
          <Tool icon="part3d" label="局部三维" off />
          <Sep />
          <Tool icon="full" label="全屏" />
          <Tool icon="zoom" label="缩放" drop />
          <Tool icon="pan" label="平移" drop />
          <Tool icon="rotscr" label="屏幕旋转" drop tight off />
          <Sep />
          <Tool icon="floors" label="选择楼层" />
          <span className="ml-auto"><More /></span>
        </div>
      </div>

      <div className="flex min-h-0 flex-1">
        <Sidebar />
        <div className="flex w-[18px] shrink-0 justify-center border-r border-[#a8a8a8] bg-[#f0f0f0]">
          <span className="w-2 bg-[radial-gradient(circle,#b8b8b8_1px,transparent_1px)] bg-[size:4px_6px]" />
        </div>
        <main className="flex min-w-0 flex-1 flex-col">
          <div className="flex h-7 shrink-0 items-center">
            <div className={`${band} h-6 gap-[7px] pl-[234px] pr-[5px]`}>
              <Tool label="旋转" off /><Sep />
              <Tool icon="extend" label="延伸" off /><Tool icon="trim" label="修剪" off /><Sep />
              <Tool icon="brk" label="打断" off /><Tool icon="merge" label="合并" off /><Tool icon="split" label="分割" off /><Sep />
              <Tool icon="align" label="对齐" off drop tight /><Tool icon="offset" label="偏移" off /><Tool icon="stretch" label="拉伸" off /><Sep />
              <Tool icon="grip" label="设置夹点" off />
            </div>
          </div>
          <div className="flex h-[29px] shrink-0 items-center gap-[5px]">
            <div className={`${band} h-[29px] gap-[7px] pl-[222px] pr-[5px]`}>
              <div className="flex items-center gap-[4px]">
                <span className="flex h-[23px] w-[46px] items-center justify-between bg-white pr-[2px]">1<Down /></span>
                <span className="flex h-[23px] w-[69px] items-center bg-white px-[2px]">
                  <select aria-label="单元" className="min-w-0 flex-1 appearance-none bg-transparent"><option>单元1</option></select><Down />
                </span>
                <Sep />
                <div className="flex"><Tool icon="prop" label="属性" boxed /><Tool icon="editbar" label="编辑钢筋" boxed /></div>
                <Tool icon="list" label="构件列表" />
              </div>
              <Tool icon="pick" label="拾取构件" off />
            </div>
            <div className={`${band} h-[29px] gap-[7px] pr-[5px]`}>
              <Grip />
              <Tool icon="two" label="两点" off /><Tool icon="para" label="平行" off /><Tool icon="angle" label="点角" off drop />
              <Tool icon="arcax" label="三点辅轴" off drop /><Tool icon="delax" label="删除辅轴" off /><Tool icon="dim" label="尺寸标注" off drop />
            </div>
          </div>
          <div className="flex h-[29px] shrink-0 items-center">
            <div className={`${band} h-7 gap-[7px] pl-[225px] pr-[5px]`}>
              <Tool icon="arc3" label="三点画弧" off drop />
              <div className="flex items-center gap-1">
                <span className="flex h-[23px] w-[56px] items-center border border-[#6e6e6e] bg-[#f8f8f8] pr-[3px]">
                  <select aria-label="半径" disabled className="min-w-0 flex-1 appearance-none"><option> </option></select><Down off />
                </span>
                <Tool icon="rect" label="矩形" off />
              </div>
              <Sep /><Tool icon="smart" label="智能布置" drop tight /><Sep />
              <Tool icon="dir" label="调整钢筋方向" /><Tool icon="cap" label="编辑承台加强筋" />
              <Tool icon="check" label="查改标注" off drop /><Tool icon="apply" label="应用到同名承台" /><Tool icon="hand" label="调整承台放坡" off />
            </div>
          </div>

          <Scene />

          <div className="flex h-[31px] shrink-0 items-center gap-[5px]">
            <div className={`${band} h-7 gap-[5px] pl-[228px] pr-[5px]`}>
              <Tool label="交点" off />
              <div className="flex"><Tool icon="perp" label="垂点" boxed /><Tool icon="mid" label="中点" boxed /></div>
              <Tool icon="vertex" label="顶点" /><Tool icon="coord" label="坐标" />
            </div>
            <div className={`${band} h-7 gap-[4px] pr-[3px] text-[#808080]`}>
              <Grip />
              <span className="flex h-[23px] w-[59px] items-center bg-white px-[2px] text-black">
                <select aria-label="偏移方式" className="min-w-0 flex-1 appearance-none bg-transparent"><option>不偏移</option></select><Down />
              </span>
              <Sep />
              <span>X=</span><Spin label="X" value="0" /><span>mm</span>
              <span>Y=</span><Spin label="Y" value="0" /><span>mm</span>
              <Sep />
              <label className="flex items-center gap-2 text-black">
                <input type="checkbox" className="size-[11px] appearance-none border border-[#9a9a9a] bg-[#f8f8f8]" />旋转
              </label>
              <Spin label="旋转角度" value="0.000" wide /><span>°</span>
            </div>
          </div>
          <div className={`${band} h-[29px] shrink-0 gap-2 border-b border-[#a6a6ae] pl-[225px]`}>
            <Tool label="删除" /><Tool icon="scale" label="缩尺配筋" /><Tool icon="info" label="钢筋信息" /><Tool icon="lib" label="钢筋图库" />
            <Tool icon="other" label="其他" drop tight /><Tool label="关闭" /><Sep />
            <span className="whitespace-nowrap">单构件钢筋总重(kg)：374.141</span>
          </div>

          <div className="min-h-0 flex-1 overflow-hidden bg-white"><BarTable /></div>
          <div className="flex h-[9px] shrink-0 items-start overflow-hidden border-t border-[#d8d8d8] bg-[#eaeaea] pr-[2px]">
            <svg viewBox="0 0 19 8" className="h-2 w-[19px] shrink-0" aria-hidden="true"><path d="M10 3v5H9L6 5.500z" fill="#333" /></svg>
            <span className="flex h-4 w-[70%] items-start justify-center rounded-sm border border-[#979797] bg-linear-to-b from-[#f8f8f8] to-[#cfcfcf] pt-[2px]">
              <svg viewBox="0 0 8 6" className="h-[6px] w-2" aria-hidden="true"><path d="M1 0v6M4 0v6M7 0v6" stroke="#555" strokeWidth="1.500" /></svg>
            </span>
            <svg viewBox="0 0 5 8" className="ml-auto h-2 w-[5px] shrink-0" aria-hidden="true"><path d="M1 2v6l4-3z" fill="#333" /></svg>
          </div>
        </main>
      </div>

      <PropertyDialog />
      <svg className="pointer-events-none absolute left-0 top-0 size-full" aria-hidden="true">
        {marks.map(([x, y, rx, ry], i) => (
          <ellipse key={i} cx={x} cy={y} rx={rx} ry={ry} fill="none" stroke="#f0f" strokeWidth="2.500" />
        ))}
      </svg>
    </div>
  );
}
